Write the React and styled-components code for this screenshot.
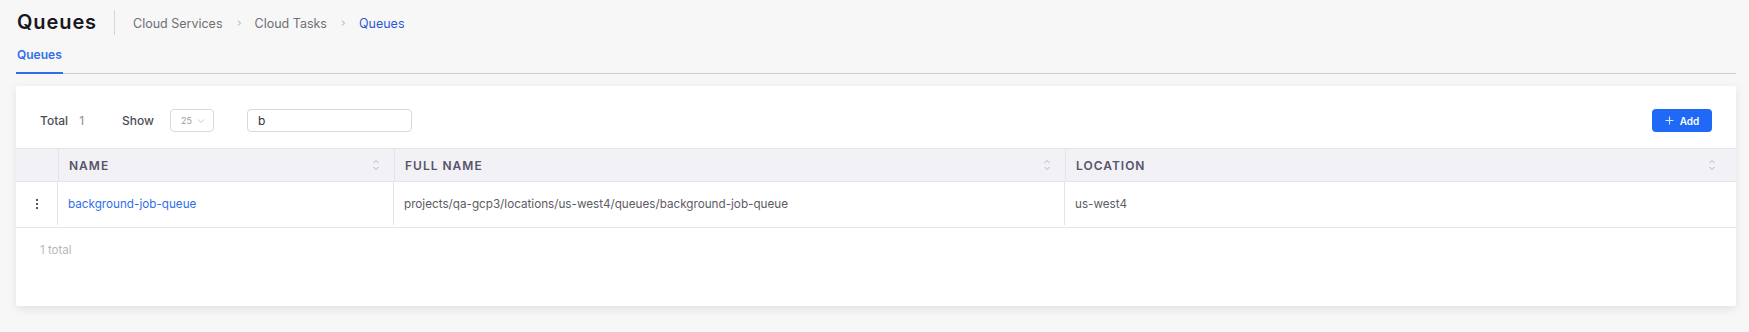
import styled, { createGlobalStyle } from "styled-components";

const GlobalStyle = createGlobalStyle`
    body {
        margin: 0;
        background: #f7f7f8;
        font-family: "Inter", "Noto Sans", sans-serif;
    }
`;

const columns = [
    { key: "name", label: "Name" },
    { key: "fullName", label: "Full Name" },
    { key: "location", label: "Location" },
];

const rows = [
    {
        name: "background-job-queue",
        fullName: "projects/qa-gcp3/locations/us-west4/queues/background-job-queue",
        location: "us-west4",
    },
];

const SortIcon = () => (
    <svg width="8" height="12" viewBox="0 0 8 12" fill="none">
        <path d="M1.5 4L4 1.5L6.5 4" stroke="#b9b8c4" strokeWidth="1" />
        <path d="M1.5 8L4 10.5L6.5 8" stroke="#b9b8c4" strokeWidth="1" />
    </svg>
);

const Chevron = ({ color = "#9a9aa3", size = 8 }) => (
    <svg width={size} height={size} viewBox="0 0 8 8" fill="none">
        <path d="M3 1.5L5.5 4L3 6.5" stroke={color} strokeWidth="0.9" />
    </svg>
);

const App = () => {
    return (
        <>
            <GlobalStyle />
            <Page>
                <Header>
                    <Title>Queues</Title>
                    <Crumbs>
                        <Crumb>Cloud Services</Crumb>
                        <Chevron />
                        <Crumb>Cloud Tasks</Crumb>
                        <Chevron />
                        <Crumb $current>Queues</Crumb>
                    </Crumbs>
                </Header>
                <Tabs>
                    <Tab $active>Queues</Tab>
                </Tabs>
                <Card>
                    <Toolbar>
                        <Label>Total</Label>
                        <Count>1</Count>
                        <Label>Show</Label>
                        <Select>
                            <span>25</span>
                            <svg width="8" height="6" viewBox="0 0 8 6" fill="none">
                                <path d="M1 1.5L4 4.5L7 1.5" stroke="#c4c4cc" strokeWidth="0.9" />
                            </svg>
                        </Select>
                        <Search value="b" readOnly />
                        <AddButton>
                            <svg width="9" height="9" viewBox="0 0 9 9" fill="none">
                                <path d="M4.5 0.5V8.5M0.5 4.5H8.5" stroke="#d7e3ff" strokeWidth="1.1" />
                            </svg>
                            Add
                        </AddButton>
                    </Toolbar>
                    <Table>
                        <HeadCell />
                        {columns.map((c, i) => (
                            <HeadCell key={c.key} $last={i === columns.length - 1}>
                                <span>{c.label}</span>
                                <SortIcon />
                            </HeadCell>
                        ))}
                        {rows.map((r) => (
                            <Row key={r.name}>
                                <Cell $actions>
                                    <Dots>
                                        <i />
                                        <i />
                                        <i />
                                    </Dots>
                                </Cell>
                                <Cell>
                                    <Link>{r.name}</Link>
                                </Cell>
                                <Cell>{r.fullName}</Cell>
                                <Cell $last>{r.location}</Cell>
                            </Row>
                        ))}
                    </Table>
                    <Footer>1 total</Footer>
                </Card>
            </Page>
        </>
    );
};

export default App;

const Page = styled.div`
    padding: 0 13px 26px 16px;
`;

const Header = styled.div`
    display: flex;
    align-items: center;
    height: 44px;
    padding-left: 1px;
`;

const Title = styled.div`
    font-size: 20px;
    font-weight: 600;
    letter-spacing: 0.9px;
    color: #18181c;
    padding-right: 17px;
    line-height: 25px;
    border-right: 1px solid #d4d4da;
`;

const Crumbs = styled.div`
    display: flex;
    align-items: center;
    gap: 12px;
    margin-left: 18px;
    padding-top: 2px;
`;

const Crumb = styled.span`
    font-size: 12.5px;
    color: ${(p) => (p.$current ? "#2d57d6" : "#6f6f75")};
`;

const Tabs = styled.div`
    display: flex;
    border-bottom: 1px solid #cfd0d6;
    height: 29px;
`;

const Tab = styled.div`
    font-size: 12px;
    font-weight: 600;
    color: #2f6fe8;
    padding: 3px 1px 0;
    margin-bottom: -1px;
    border-bottom: 2px solid ${(p) => (p.$active ? "#2f6fe8" : "transparent")};
`;

const Card = styled.div`
    margin-top: 12px;
    height: 220px;
    background: #fff;
    border-radius: 2px;
    box-shadow: 0 3px 10px rgba(0, 0, 0, 0.09);
`;

const Toolbar = styled.div`
    display: flex;
    align-items: center;
    height: 62px;
    padding: 7px 24px 0 24px;
    box-sizing: border-box;
`;

const Label = styled.span`
    font-size: 12px;
    font-weight: 500;
    color: #4e4e55;
`;

const Count = styled.span`
    font-size: 12px;
    color: #8b8b93;
    margin: 0 38px 0 11px;
`;

const Select = styled.div`
    display: flex;
    align-items: center;
    gap: 5px;
    width: 44px;
    height: 23px;
    box-sizing: border-box;
    margin-left: 16px;
    padding-left: 10px;
    border: 1px solid #d8d8de;
    border-radius: 4px;
    font-size: 9px;
    color: #9a9aa2;
`;

const Search = styled.input`
    width: 165px;
    height: 23px;
    box-sizing: border-box;
    margin-left: 33px;
    padding: 0 10px;
    border: 1px solid #d8d8de;
    border-radius: 4px;
    outline: 0;
    font-family: inherit;
    font-size: 12px;
    color: #333;
`;

const AddButton = styled.button`
    display: flex;
    align-items: center;
    justify-content: center;
    gap: 6px;
    margin-left: auto;
    width: 60px;
    height: 23px;
    border: 0;
    border-radius: 4px;
    background: #1f69f6;
    color: #fff;
    font-family: inherit;
    font-size: 10px;
    font-weight: 600;
`;

const Table = styled.div`
    display: grid;
    grid-template-columns: 42px 336px 671px 1fr;
`;

const HeadCell = styled.div`
    display: flex;
    align-items: center;
    justify-content: space-between;
    height: 34px;
    box-sizing: border-box;
    padding: 0 ${(p) => (p.$last ? "20px" : "14px")} 0 10px;
    background: #f2f1f6;
    border-top: 1px solid #e4e3ea;
    border-bottom: 1px solid #e4e3ea;
    border-left: 1px solid #e4e3ea;
    font-size: 12px;
    font-weight: 600;
    letter-spacing: 1px;
    text-transform: uppercase;
    color: #57546b;

    &:first-child {
        border-left: 0;
    }
`;

const Row = styled.div`
    display: contents;
`;

const Cell = styled.div`
    display: flex;
    align-items: center;
    justify-content: ${(p) => (p.$actions ? "center" : "flex-start")};
    height: 46px;
    box-sizing: border-box;
    padding: 0 10px 2px;
    font-size: 11.7px;
    color: #5c5c63;
    border-bottom: 1px solid #e4e3ea;
    background-image: ${(p) =>
        p.$last ? "none" : "linear-gradient(#e4e3ea, #e4e3ea)"};
    background-size: 1px 43px;
    background-position: right top;
    background-repeat: no-repeat;
`;

const Dots = styled.div`
    display: flex;
    flex-direction: column;
    gap: 2px;

    i {
        width: 2px;
        height: 2px;
        background: #55556a;
    }
`;

const Link = styled.span`
    color: #2f6fe8;
`;

const Footer = styled.div`
    padding: 15px 24px;
    font-size: 11.5px;
    color: #b8b8be;
`;
